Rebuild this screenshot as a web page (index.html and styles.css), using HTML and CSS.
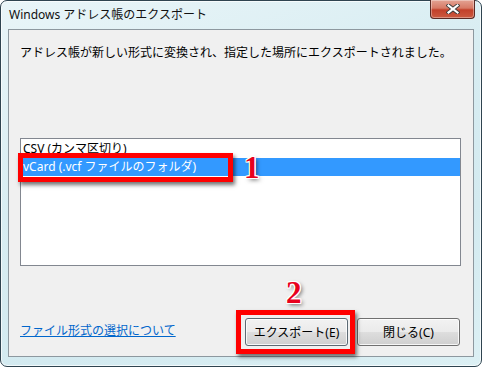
FILE: index.html
```html
<!DOCTYPE html>
<html lang="ja">
<head>
<meta charset="utf-8">
<title>Windows アドレス帳のエクスポート</title>
<link rel="stylesheet" href="styles.css">
</head>
<body>
<div class="window">
  <div class="titlebar">
    <span class="title">Windows アドレス帳のエクスポート</span>
    <div class="close">
      <svg width="14" height="10" viewBox="0 0 14 10">
        <path d="M2.5 1.5 L11.5 8.5 M11.5 1.5 L2.5 8.5" stroke="#3b3b3b" stroke-width="4" stroke-linecap="square"/>
        <path d="M2.5 1.5 L11.5 8.5 M11.5 1.5 L2.5 8.5" stroke="#ffffff" stroke-width="2.2" stroke-linecap="square"/>
      </svg>
    </div>
  </div>
  <div class="panel">
    <p class="msg">アドレス帳が新しい形式に変換され、指定した場所にエクスポートされました。</p>
    <div class="listbox">
      <div class="item">CSV (カンマ区切り)</div>
      <div class="item sel">vCard (.vcf ファイルのフォルダ)</div>
    </div>
    <div class="footer">
      <a class="link" href="#">ファイル形式の選択について</a>
      <div class="buttons">
        <button class="btn default">エクスポート(E)</button>
        <button class="btn">閉じる(C)</button>
      </div>
    </div>
  </div>
  <div class="mark mark1"></div>
  <div class="mark mark2"></div>
  <div class="num num1">1</div>
  <div class="num num2">2</div>
</div>
</body>
</html>
```
FILE: styles.css
```css
html, body {
  margin: 0;
  padding: 0;
  background: #ffffff;
}
body {
  width: 482px;
  height: 367px;
  overflow: hidden;
  font-family: "Noto Sans", "Noto Sans CJK JP", sans-serif;
  font-size: 12px;
  color: #000;
}
.window {
  position: relative;
  box-sizing: border-box;
  width: 482px;
  height: 367px;
  border: 1px solid #2f4450;
  border-radius: 7px;
  background: linear-gradient(160deg, #e9f5f8 0%, #d8edf2 40%, #d3eaf0 70%, #dcf0f4 100%);
  box-shadow: inset 0 0 0 1px rgba(255,255,255,0.7);
  display: flex;
  flex-direction: column;
}
.titlebar {
  height: 28px;
  display: flex;
  justify-content: space-between;
  align-items: flex-start;
  padding: 0 6px 0 8px;
}
.title {
  margin-top: 5px;
  font-size: 12px;
  line-height: 18px;
  color: #111;
}
.close {
  margin-top: -1px;
  width: 45px;
  height: 19px;
  box-sizing: border-box;
  border: 1px solid #5a2a24;
  border-top: none;
  border-radius: 0 0 4px 4px;
  background: linear-gradient(#e3a394 0%, #d77a66 45%, #c2402a 55%, #cb5a40 100%);
  box-shadow: inset 0 0 0 1px rgba(255,255,255,0.35);
  display: flex;
  align-items: center;
  justify-content: center;
}
.panel {
  box-sizing: border-box;
  margin: 0 7px;
  height: 328px;
  border: 1px solid #8d989f;
  background: #f0f0f0;
  padding: 15px 12px 0 11px;
  display: flex;
  flex-direction: column;
}
.msg {
  margin: 0;
  line-height: 16px;
  font-size: 12px;
  white-space: nowrap;
}
.listbox {
  margin-top: 77px;
  box-sizing: border-box;
  height: 128px;
  border: 1px solid #828790;
  background: #fff;
  padding-top: 1px;
}
.item {
  height: 18px;
  line-height: 18px;
  padding-left: 2px;
  white-space: nowrap;
}
.item.sel {
  background: #3399ff;
  color: #fff;
}
.footer {
  margin-top: 52px;
  display: flex;
  justify-content: space-between;
  align-items: center;
  padding-right: 1px;
}
.link {
  color: #0066cc;
  text-decoration: underline;
  line-height: 16px;
  margin-top: -2px;
}
.buttons {
  display: flex;
  gap: 9px;
}
.btn {
  box-sizing: border-box;
  width: 103px;
  height: 28px;
  border: 1px solid #707070;
  border-radius: 3px;
  background: linear-gradient(#f2f2f2 0%, #ebebeb 48%, #dddddd 52%, #cfcfcf 100%);
  box-shadow: inset 0 0 0 1px rgba(255,255,255,0.8);
  font-family: inherit;
  font-size: 12px;
  color: #000;
  padding: 0;
}
.btn.default {
  border-color: #5c6a74;
}
.mark {
  position: absolute;
  box-sizing: border-box;
  border: 5px solid #ff0000;
  box-shadow: 2px 3px 4px rgba(0,0,0,0.55);
}
.mark1 {
  left: 17px;
  top: 152px;
  width: 215px;
  height: 29px;
}
.mark2 {
  left: 235px;
  top: 309px;
  width: 119px;
  height: 44px;
}
.num {
  position: absolute;
  font-family: "Liberation Serif", "DejaVu Serif", serif;
  font-weight: bold;
  font-size: 31px;
  line-height: 31px;
  color: #e8001c;
  text-shadow:
    1px 0 0 #fff, -1px 0 0 #fff, 0 1px 0 #fff, 0 -1px 0 #fff,
    1px 1px 0 #fff, -1px -1px 0 #fff, 1px -1px 0 #fff, -1px 1px 0 #fff,
    2px 2px 4px rgba(0,0,0,0.6);
}
.num1 {
  left: 243px;
  top: 151px;
}
.num2 {
  left: 285px;
  top: 276px;
}
```
